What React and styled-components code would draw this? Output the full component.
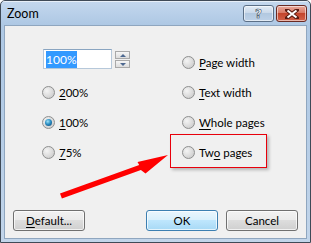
import React from 'react';
import styled, { createGlobalStyle, css } from 'styled-components';

const GlobalStyle = createGlobalStyle`
  html, body {
    margin: 0;
    padding: 0;
    background: #ffffff;
  }
  body {
    font-family: Lato, "Noto Sans", sans-serif;
    font-size: 11.5px;
    color: #000;
  }
`;

function Radio({ checked, children }) {
  return (
    <RadioRow>
      <RadioCircle $checked={checked} />
      <span>{children}</span>
    </RadioRow>
  );
}

export default function App() {
  return (
    <>
      <GlobalStyle />
      <Window>
        <TitleBar>
          <Title>Zoom</Title>
          <CaptionButtons>
            <HelpButton>?</HelpButton>
            <CloseButton>
              <svg width="14" height="10" viewBox="0 0 14 10">
                <path d="M2 1 L12 9 M12 1 L2 9" stroke="#5a1c12" strokeWidth="4" strokeLinecap="square" />
                <path d="M2.5 1.5 L11.5 8.5 M11.5 1.5 L2.5 8.5" stroke="#fff" strokeWidth="2" />
              </svg>
            </CloseButton>
          </CaptionButtons>
        </TitleBar>
        <Content>
          <Columns>
            <LeftColumn>
              <Spin>
                <SpinInput><Selected>100%</Selected></SpinInput>
                <SpinButtons>
                  <SpinButton><Tri $up /></SpinButton>
                  <SpinButton><Tri /></SpinButton>
                </SpinButtons>
              </Spin>
              <Radio><u>2</u>00%</Radio>
              <Radio checked><u>1</u>00%</Radio>
              <Radio><u>7</u>5%</Radio>
            </LeftColumn>
            <RightColumn>
              <Radio><u>P</u>age width</Radio>
              <Radio><u>T</u>ext width</Radio>
              <Radio><u>W</u>hole pages</Radio>
              <Radio>Tw<u>o</u> pages</Radio>
            </RightColumn>
          </Columns>
          <Footer>
            <Button><u>D</u>efault...</Button>
            <FooterRight>
              <Button $default>OK</Button>
              <Button>Cancel</Button>
            </FooterRight>
          </Footer>
        </Content>
        <HighlightBox />
        <Arrow width="311" height="243" viewBox="0 0 311 243">
          <polygon
            points="60,193.6 139.2,165.1 137.5,162 168,155 145.5,173.5 140.9,169.9 61.9,198.4"
            fill="#ff0000"
          />
        </Arrow>
      </Window>
    </>
  );
}

const Window = styled.div`
  position: relative;
  width: 311px;
  height: 243px;
  box-sizing: border-box;
  border: 1px solid #3f4a57;
  border-radius: 5px 5px 0 0;
  background: linear-gradient(#c4d8ee 0px, #aec8e4 24px, #b4cce6 120px, #c2d5ea 243px);
  display: flex;
  flex-direction: column;
  overflow: hidden;
`;

const TitleBar = styled.div`
  height: 24px;
  flex: none;
  display: flex;
  align-items: flex-start;
  justify-content: space-between;
  box-shadow: inset 0 1px 0 rgba(255, 255, 255, 0.6);
`;

const Title = styled.div`
  font-size: 12.5px;
  padding: 5px 0 0 6px;
  color: #000;
`;

const CaptionButtons = styled.div`
  display: flex;
  gap: 2px;
  padding: 4px 3px 0 0;
`;

const captionBase = css`
  height: 17px;
  box-sizing: border-box;
  border: 1px solid #5b6f86;
  border-radius: 3px;
  display: flex;
  align-items: center;
  justify-content: center;
  box-shadow: inset 0 0 0 1px rgba(255, 255, 255, 0.55);
`;

const HelpButton = styled.div`
  ${captionBase};
  width: 31px;
  background: linear-gradient(#e3ecf6 0%, #cad9ea 45%, #b2c8e0 50%, #bed2e8 100%);
  font-family: "DejaVu Sans", sans-serif;
  font-weight: bold;
  font-size: 12px;
  color: #fff;
  -webkit-text-stroke: 0.6px #3c4b5e;
`;

const CloseButton = styled.div`
  ${captionBase};
  width: 31px;
  border-color: #6a2a22;
  background: linear-gradient(#e9a99b 0%, #d97a66 45%, #c4452c 50%, #d2624a 100%);
`;

const Content = styled.div`
  flex: 1;
  margin: 0 3px 3px 3px;
  background: #f0f0f0;
  border: 1px solid #8fa6bf;
  display: flex;
  flex-direction: column;
`;

const Columns = styled.div`
  flex: 1;
  display: grid;
  grid-template-columns: 140px 1fr;
  padding: 21px 0 0 38px;
`;

const LeftColumn = styled.div`
  display: flex;
  flex-direction: column;
`;

const RightColumn = styled.div`
  display: flex;
  flex-direction: column;
`;

const Spin = styled.div`
  display: flex;
  align-items: flex-start;
  gap: 3px;
  height: 30px;
  margin-top: 2px;
  margin-bottom: -2px;
`;

const SpinInput = styled.div`
  width: 69px;
  height: 20px;
  box-sizing: border-box;
  border: 1px solid #b6c8da;
  border-top-color: #8aa5c1;
  background: #fff;
  padding: 2px 0 0 2px;
  font-size: 12px;
  line-height: 15px;
`;

const Selected = styled.span`
  background: #3399ff;
  color: #fff;
  padding: 1px 0;
`;

const SpinButtons = styled.div`
  display: flex;
  flex-direction: column;
  gap: 1px;
  padding-top: 2px;
`;

const SpinButton = styled.div`
  width: 15px;
  height: 8px;
  box-sizing: border-box;
  border: 1px solid #a9a9a9;
  background: linear-gradient(#f6f6f6, #dcdcdc);
  display: flex;
  align-items: center;
  justify-content: center;
`;

const Tri = styled.div`
  width: 0;
  height: 0;
  border-left: 3.5px solid transparent;
  border-right: 3.5px solid transparent;
  ${(p) => (p.$up ? 'border-bottom: 3px solid #4d6890;' : 'border-top: 3px solid #4d6890;')}
`;

const RadioRow = styled.div`
  height: 30px;
  display: flex;
  align-items: center;
  gap: 4px;
  font-size: 11.5px;
  color: #000;
  margin-left: -1px;
  u {
    text-decoration-thickness: 1px;
    text-underline-offset: 2px;
  }
`;

const RadioCircle = styled.div`
  position: relative;
  width: 13px;
  height: 13px;
  box-sizing: border-box;
  border-radius: 50%;
  border: 1px solid #8e8f8f;
  background: radial-gradient(circle at 35% 35%, #f4f4f4 0%, #d8d8d8 60%, #c4c4c4 100%);
  flex: none;
  ${(p) =>
    p.$checked &&
    css`
      &::after {
        content: '';
        position: absolute;
        left: 2px;
        top: 2px;
        width: 7px;
        height: 7px;
        border-radius: 50%;
        background: radial-gradient(circle at 40% 35%, #9fe2f7 0%, #2c8fc4 45%, #0b3f6d 100%);
      }
    `}
`;

const Footer = styled.div`
  display: flex;
  justify-content: space-between;
  padding: 0 8px 7px 8px;
`;

const FooterRight = styled.div`
  display: flex;
  gap: 8px;
`;

const Button = styled.div`
  width: 72px;
  height: 21px;
  box-sizing: border-box;
  border: 1px solid ${(p) => (p.$default ? '#3c7fb1' : '#707070')};
  border-radius: 3px;
  background: ${(p) =>
    p.$default
      ? 'linear-gradient(#eaf6fd 0%, #d9f0fc 45%, #bee6fd 50%, #a7d9f5 100%)'
      : 'linear-gradient(#f2f2f2 0%, #ebebeb 45%, #dddddd 50%, #cfcfcf 100%)'};
  box-shadow: inset 0 0 0 1px rgba(255, 255, 255, 0.7);
  display: flex;
  align-items: center;
  justify-content: center;
  font-size: 11.5px;
  color: #000;
  u {
    text-underline-offset: 2px;
  }
`;

const HighlightBox = styled.div`
  position: absolute;
  left: 169px;
  top: 133px;
  width: 97px;
  height: 34px;
  box-sizing: border-box;
  border: 1.5px solid #e8000b;
  box-shadow: 2px 2px 3px rgba(0, 0, 0, 0.25);
  pointer-events: none;
`;

const Arrow = styled.svg`
  position: absolute;
  left: -1px;
  top: -1px;
  pointer-events: none;
`;
